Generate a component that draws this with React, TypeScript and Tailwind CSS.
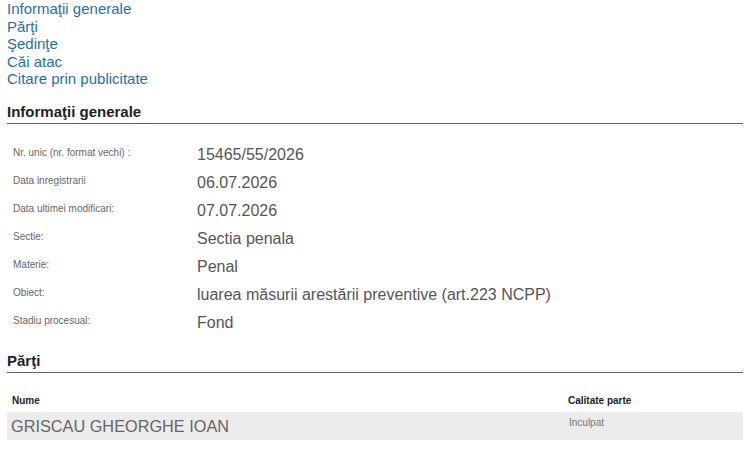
export default function App() {
  const links = [
    "Informaţii generale",
    "Părţi",
    "Şedinţe",
    "Căi atac",
    "Citare prin publicitate",
  ];

  const rows = [
    { label: "Nr. unic (nr. format vechi) :", value: "15465/55/2026" },
    { label: "Data inregistrarii", value: "06.07.2026" },
    { label: "Data ultimei modificari:", value: "07.07.2026" },
    { label: "Sectie:", value: "Sectia penala" },
    { label: "Materie:", value: "Penal" },
    { label: "Obiect:", value: "luarea măsurii arestării preventive (art.223 NCPP)" },
    { label: "Stadiu procesual:", value: "Fond" },
  ];

  return (
    <div className="w-[750px] h-[456px] overflow-hidden bg-white px-[7px] font-['Liberation_Sans',Arial,sans-serif]">
      <div className="flex flex-col items-start">
        {links.map((l) => (
          <a key={l} href="#" className="text-[15px] leading-[17.5px] text-[#1f6fa6]">
            {l}
          </a>
        ))}
      </div>

      <h2 className="mt-[15px] border-b-[1.5px] border-[#666] pb-[2px] text-[15px] leading-[18px] font-bold text-[#222]">
        Informaţii generale
      </h2>

      <div className="mt-[17px]">
        {rows.map((r) => (
          <div key={r.label} className="flex h-[28px]">
            <div className="w-[190px] shrink-0 pl-[6px] pt-[6px] text-[10px] leading-[12px] text-[#666]">
              {r.label}
            </div>
            <div className="text-[16px] leading-[28px] text-[#555]">{r.value}</div>
          </div>
        ))}
      </div>

      <h2 className="mt-[15px] border-b-[1.5px] border-[#666] pb-[2px] text-[15px] leading-[18px] font-bold text-[#222]">
        Părţi
      </h2>

      <div className="mt-[17px]">
        <div className="flex h-[22px] items-center text-[10px] font-bold text-[#222]">
          <div className="w-[561px] shrink-0 pl-[5px]">Nume</div>
          <div>Calitate parte</div>
        </div>
        <div className="flex h-[28px] bg-[#ececec]">
          <div className="w-[561px] shrink-0 pl-[4px] text-[16.3px] leading-[28px] text-[#666]">
            GRISCAU GHEORGHE IOAN
          </div>
          <div className="pl-[1px] pt-[5px] text-[10px] leading-[12px] text-[#777]">Inculpat</div>
        </div>
      </div>
    </div>
  );
}
